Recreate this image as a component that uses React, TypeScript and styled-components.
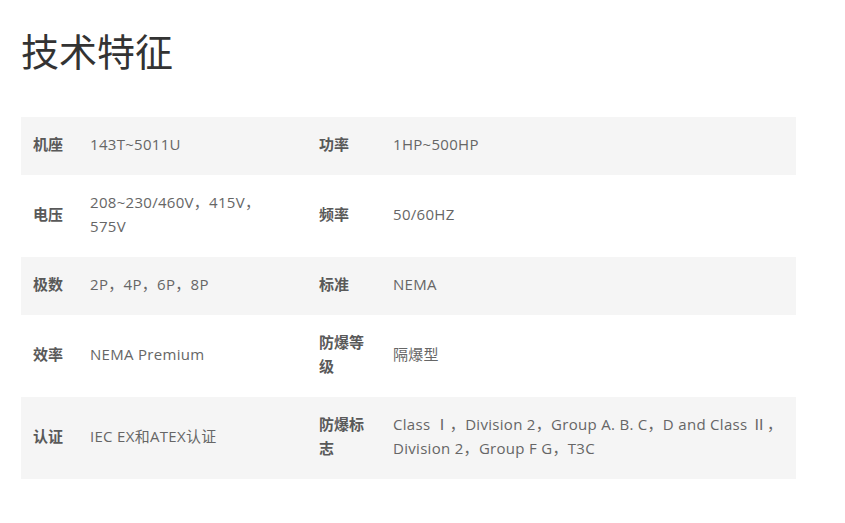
import styled, { createGlobalStyle } from 'styled-components';

const GlobalStyle = createGlobalStyle`
    body {
        margin: 0;
        background: #ffffff;
        font-family: "Open Sans", "Noto Sans CJK SC", sans-serif;
    }
`;

const Pagina = styled.div`
    padding: 0 0 0 21px;
    width: 775px;
`;

const Titulo = styled.h2`
    margin: 0;
    padding-top: 25px;
    height: 117px;
    box-sizing: border-box;
    font-family: "Noto Sans CJK SC", sans-serif;
    font-size: 38px;
    line-height: 50px;
    font-weight: 400;
    color: #333333;
`;

const Tabela = styled.table`
    width: 775px;
    border-collapse: collapse;
    table-layout: fixed;
    font-size: 15px;
    line-height: 24px;
`;

const Linha = styled.tr<{ $cinza: boolean }>`
    background-color: ${({ $cinza }) => ($cinza ? '#f5f5f5' : '#ffffff')};
`;

const Rotulo = styled.td`
    padding: 15px 12px 19px;
    font-family: "Noto Sans CJK SC", sans-serif;
    font-weight: 700;
    color: #595959;
    vertical-align: middle;
`;

const Valor = styled.td`
    padding: 15px 12px 19px;
    color: #666666;
    letter-spacing: 0.3px;
    vertical-align: middle;
`;

type Item = {
    r1: string
    v1: string
    r2: string
    v2: string
}

const itens: Item[] = [
    { r1: '机座', v1: '143T~5011U', r2: '功率', v2: '1HP~500HP' },
    { r1: '电压', v1: '208~230/460V，415V，575V', r2: '频率', v2: '50/60HZ' },
    { r1: '极数', v1: '2P，4P，6P，8P', r2: '标准', v2: 'NEMA' },
    { r1: '效率', v1: 'NEMA Premium', r2: '防爆等级', v2: '隔爆型' },
    { r1: '认证', v1: 'IEC EX和ATEX认证', r2: '防爆标志', v2: 'Class Ⅰ，Division 2，Group A. B. C，D and Class Ⅱ，Division 2，Group F G，T3C' },
];

export default function App() {
    return (
        <Pagina>
            <GlobalStyle />
            <Titulo>技术特征</Titulo>
            <Tabela>
                <colgroup>
                    <col style={{ width: 57 }} />
                    <col style={{ width: 229 }} />
                    <col style={{ width: 74 }} />
                    <col />
                </colgroup>
                <tbody>
                    {itens.map((item, i) => (
                        <Linha key={item.r1} $cinza={i % 2 === 0}>
                            <Rotulo>{item.r1}</Rotulo>
                            <Valor>{item.v1}</Valor>
                            <Rotulo>{item.r2}</Rotulo>
                            <Valor>{item.v2}</Valor>
                        </Linha>
                    ))}
                </tbody>
            </Tabela>
        </Pagina>
    );
}
